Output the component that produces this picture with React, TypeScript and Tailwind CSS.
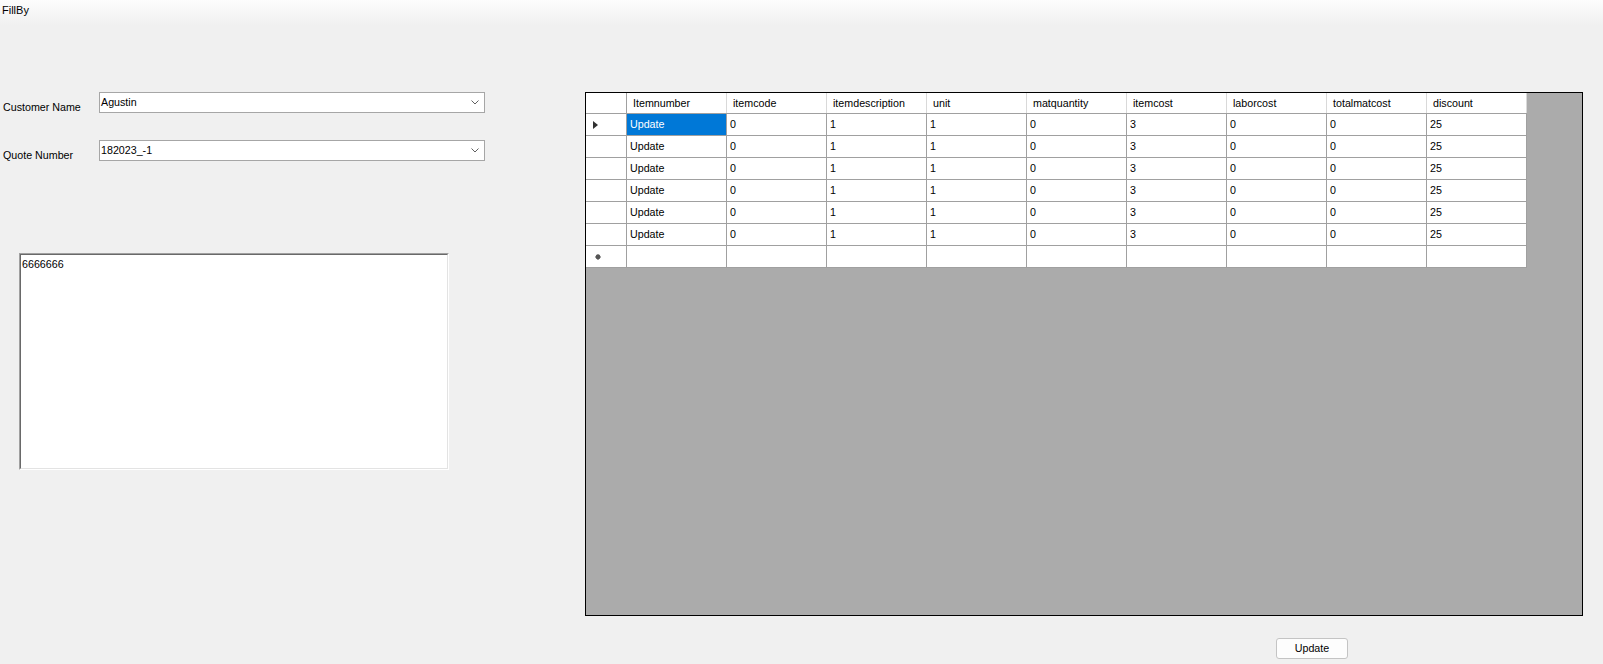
import React from "react";

const cols = [
  "Itemnumber",
  "itemcode",
  "itemdescription",
  "unit",
  "matquantity",
  "itemcost",
  "laborcost",
  "totalmatcost",
  "discount",
];

const rowData = ["Update", "0", "1", "1", "0", "3", "0", "0", "25"];

function Chevron() {
  return (
    <svg width="8" height="5" viewBox="0 0 8 5" className="shrink-0">
      <polyline points="0.5,0.5 4,4 7.5,0.5" fill="none" stroke="#606060" strokeWidth="1" />
    </svg>
  );
}

function Combo({ value }: { value: string }) {
  return (
    <div className="w-[386px] h-[21px] bg-white border border-[#a6a6a6] flex items-center pl-[1px] pr-[5px]">
      <span className="flex-1 leading-[13px] text-black">{value}</span>
      <Chevron />
    </div>
  );
}

export default function App() {
  return (
    <div className="w-[1603px] h-[664px] bg-[#f0f0f0] font-['Liberation_Sans',Arial,sans-serif] text-[10.7px] text-black overflow-hidden">
      {/* Menu strip */}
      <div className="h-[25px] bg-linear-to-b from-[#fdfdfd] to-[#f0f0f0] pl-[2px] pt-[2px]">
        <span className="text-[11px] leading-[13px]">FillBy</span>
      </div>

      <div className="flex pt-[67px]">
        {/* Left panel */}
        <div className="w-[585px] shrink-0 flex flex-col">
          <div className="flex items-start">
            <div className="w-[99px] pl-[3px] pt-[9px] leading-[13px]">Customer Name</div>
            <Combo value="Agustin" />
          </div>
          <div className="flex items-start mt-[26px]">
            <div className="w-[99px] pl-[3px] pt-[9px] leading-[13px]">Quote Number</div>
            <Combo value="182023_-1" />
          </div>
          <div className="ml-[19px] mt-[91px] w-[430px] h-[217px] border-t border-l border-[#a0a0a0] border-r border-b border-r-white border-b-white">
            <div className="w-full h-full bg-white border-t border-l border-[#696969] border-r border-b border-r-[#e3e3e3] border-b-[#e3e3e3] pl-[1px] pt-[1px]">
              <span className="leading-[13px]">6666666</span>
            </div>
          </div>
        </div>

        {/* Right panel */}
        <div className="flex flex-col">
          <div className="w-[998px] h-[524px] border border-black bg-[#ababab]">
            <div className="inline-flex flex-col bg-white">
              {/* Header */}
              <div className="flex h-[21px] border-b border-[#a0a0a0]">
                <div className="w-[41px] border-r border-[#a0a0a0]" />
                {cols.map((c) => (
                  <div
                    key={c}
                    className="w-[100px] border-r border-[#d9d9d9] flex items-center pl-[6px] leading-[13px]"
                  >
                    {c}
                  </div>
                ))}
              </div>
              {/* Data rows */}
              {Array.from({ length: 6 }).map((_, r) => (
                <div key={r} className="flex h-[22px] border-b border-[#a0a0a0]">
                  <div className="w-[41px] border-r border-[#a0a0a0] flex items-center pl-[7px]">
                    {r === 0 && (
                      <svg width="5" height="8" viewBox="0 0 5 8">
                        <polygon points="0,0 5,4 0,8" fill="#303030" />
                      </svg>
                    )}
                  </div>
                  {rowData.map((v, c) => (
                    <div
                      key={c}
                      className={
                        r === 0 && c === 0
                          ? "w-[100px] border-r border-[#a0a0a0] flex items-center pl-[3px] leading-[13px] bg-[#0078d7] text-white"
                          : "w-[100px] border-r border-[#a0a0a0] flex items-center pl-[3px] leading-[13px]"
                      }
                    >
                      {v}
                    </div>
                  ))}
                </div>
              ))}
              {/* New row */}
              <div className="flex h-[22px] border-b border-[#a0a0a0]">
                <div className="w-[41px] border-r border-[#a0a0a0] flex items-center pl-[9px]">
                  <svg width="6" height="6" viewBox="0 0 6 6">
                    <circle cx="3" cy="3" r="2.4" fill="#555555" />
                    <line x1="3" y1="0" x2="3" y2="6" stroke="#555555" strokeWidth="0.8" />
                    <line x1="0" y1="3" x2="6" y2="3" stroke="#555555" strokeWidth="0.8" />
                  </svg>
                </div>
                {cols.map((c) => (
                  <div key={c} className="w-[100px] border-r border-[#a0a0a0]" />
                ))}
              </div>
            </div>
          </div>
          <div className="ml-[691px] mt-[22px]">
            <button className="w-[72px] h-[21px] bg-[#fdfdfd] border border-[#c4c4c4] rounded-[3px] flex items-center justify-center leading-[13px] text-[10.7px]">
              Update
            </button>
          </div>
        </div>
      </div>
    </div>
  );
}
